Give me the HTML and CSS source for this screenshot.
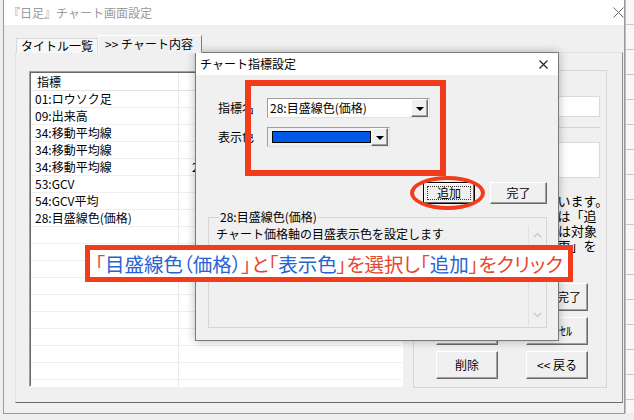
FILE: index.html
```html
<!DOCTYPE html>
<html lang="ja">
<head>
    <meta charset="UTF-8">
    <meta name="viewport" content="width=device-width, initial-scale=1.0">
    <title>チャート指標設定</title>
    <link rel="stylesheet" href="styles.css">
</head>
<body>
    <div class="desk">
        <div class="window">
            <div class="titlebar">
                <span class="title inactive">『日足』チャート画面設定</span>
                <svg class="close big" width="11" height="11" viewBox="0 0 11 11"><path d="M0.5 0.5 L10.5 10.5 M10.5 0.5 L0.5 10.5" stroke="#6a6a6a" stroke-width="1" fill="none"/></svg>
            </div>
            <div class="window-body">
                <div class="tabs">
                    <div class="tab">タイトル一覧</div>
                    <div class="tab active">&gt;&gt; チャート内容</div>
                </div>
                <div class="tab-panel">
                    <div class="list">
                        <div class="list-head">
                            <div class="cell first">指標</div>
                            <div class="cell"></div>
                        </div>
                        <div class="list-row"><div class="cell first">01:ロウソク足</div><div class="cell"></div></div>
                        <div class="list-row"><div class="cell first">09:出来高</div><div class="cell"></div></div>
                        <div class="list-row"><div class="cell first">34:移動平均線</div><div class="cell"></div></div>
                        <div class="list-row"><div class="cell first">34:移動平均線</div><div class="cell"></div></div>
                        <div class="list-row"><div class="cell first">34:移動平均線</div><div class="cell num">25</div></div>
                        <div class="list-row"><div class="cell first">53:GCV</div><div class="cell"></div></div>
                        <div class="list-row"><div class="cell first">54:GCV平均</div><div class="cell"></div></div>
                        <div class="list-row"><div class="cell first">28:目盛線色(価格)</div><div class="cell"></div></div>
                        <div class="list-row"><div class="cell first"></div><div class="cell"></div></div>
                        <div class="list-row"><div class="cell first"></div><div class="cell"></div></div>
                        <div class="list-row"><div class="cell first"></div><div class="cell"></div></div>
                        <div class="list-row"><div class="cell first"></div><div class="cell"></div></div>
                        <div class="list-row"><div class="cell first"></div><div class="cell"></div></div>
                        <div class="list-row"><div class="cell first"></div><div class="cell"></div></div>
                        <div class="list-row"><div class="cell first"></div><div class="cell"></div></div>
                        <div class="list-row"><div class="cell first"></div><div class="cell"></div></div>
                        <div class="list-row"><div class="cell first"></div><div class="cell"></div></div>
                        <div class="list-row"><div class="cell first"></div><div class="cell"></div></div>
                    </div>
                    <div class="side-group">
                        <div class="field"></div>
                        <div class="rule"></div>
                        <div class="field tall"></div>
                        <p class="hint">指標の一覧を表示しています。<br>指標を新しく加える時は「追<br>加」を、変更する場合は対象<br>の指標を選択して「変更」を</p>
                        <div class="btn-grid">
                            <div class="btn">変更</div>
                            <div class="btn">設定完了</div>
                            <div class="btn">新規</div>
                            <div class="btn">ｷｬﾝｾﾙ</div>
                            <div class="btn">削除</div>
                            <div class="btn">&lt;&lt; 戻る</div>
                        </div>
                    </div>
                </div>
            </div>
        </div>
        <div class="backdrop"></div>

        <div class="dialog">
            <div class="titlebar small">
                <span class="title">チャート指標設定</span>
                <svg class="close" width="9" height="9" viewBox="0 0 9 9"><path d="M0.5 0.5 L8.5 8.5 M8.5 0.5 L0.5 8.5" stroke="#222" stroke-width="1.1" fill="none"/></svg>
            </div>
            <div class="dialog-body">
                <div class="form-row">
                    <label>指標名</label>
                    <div class="combo wide">
                        <span class="combo-text">28:目盛線色(価格)</span>
                        <span class="drop"></span>
                    </div>
                </div>
                <div class="form-row">
                    <label>表示色</label>
                    <div class="combo color">
                        <span class="swatch"></span>
                        <span class="drop"></span>
                    </div>
                </div>
                <div class="actions">
                    <div class="btn focus add">追加</div>
                    <div class="btn done">完了</div>
                </div>
                <fieldset class="info">
                    <legend>28:目盛線色(価格)</legend>
                    <div class="desc">
                        <div class="desc-text">チャート価格軸の目盛表示色を設定します</div>
                        <div class="scroll">
                            <svg width="9" height="6" viewBox="0 0 9 6"><path d="M1 5 L4.5 1.5 L8 5" stroke="#c4c4c4" stroke-width="1.2" fill="none"/></svg>
                            <svg width="9" height="6" viewBox="0 0 9 6"><path d="M1 1 L4.5 4.5 L8 1" stroke="#c4c4c4" stroke-width="1.2" fill="none"/></svg>
                        </div>
                    </div>
                </fieldset>
            </div>
        </div>

        <div class="mark-rect"></div>
        <div class="mark-ring"></div>
        <div class="note">
            <span class="r">「</span><span class="b">目盛線色（価格）</span><span class="r">」と「</span><span class="b">表示色</span><span class="r">」を選択し「</span><span class="b">追加</span><span class="r">」をクリック</span>
        </div>
    </div>
</body>
</html>
```

FILE: styles.css
```css
* {
    box-sizing: border-box;
}

body {
    margin: 0;
    font-family: "Noto Sans CJK JP", "Noto Sans", sans-serif;
    font-size: 12px;
    line-height: 14px;
    color: #000;
    background: #eeeeee;
}

.desk {
    position: relative;
    width: 634px;
    height: 420px;
    overflow: hidden;
    display: flex;
    background: #eeeeee;
}

/* main window */
.window {
    flex: none;
    margin-left: 3px;
    width: 622px;
    height: 414px;
    border: 1px solid #9a9a9a;
    border-top: none;
    background: #f0f0f0;
    display: flex;
    flex-direction: column;
}

.titlebar {
    height: 25px;
    background: #fff;
    display: flex;
    align-items: center;
    justify-content: space-between;
    padding-left: 4px;
}

.title.inactive {
    color: #9a9a9a;
}

.close.big {
    margin-top: -1px;
}

.window-body {
    flex: 1;
    display: flex;
    flex-direction: column;
    padding: 10px 1px 10px 11px;
}

.tabs {
    display: flex;
    align-items: flex-end;
    height: 18px;
    margin-left: 1px;
    position: relative;
    z-index: 1;
}

.tab {
    height: 15px;
    line-height: 14px;
    padding: 0 4px;
    white-space: nowrap;
    background: #f7f7f7;
    border: 1px solid #d9d9d9;
    border-bottom: none;
}

.tab:first-child {
    width: 82px;
}

.tab.active {
    width: 104px;
    height: 18px;
    padding: 1px 6px 0;
    background: #f0f0f0;
    border-color: #ffffff #7d7d7d #f0f0f0 #ffffff;
    border-bottom: 1px solid #f0f0f0;
}

.tab-panel {
    flex: 1;
    display: flex;
    align-items: flex-start;
    gap: 10px;
    padding: 17px 14px 0 13px;
    border: 1px solid;
    border-color: #e3e3e3 #8f8f8f #6a6a6a #e3e3e3;
    margin-top: -1px;
}

/* indicator list */
.list {
    width: 374px;
    height: 316px;
    margin-top: 1px;
    overflow: hidden;
    background: #fff;
    border: 1px solid;
    border-color: #a0a0a0 #ffffff #ffffff #a0a0a0;
    box-shadow: inset 1px 1px #696969;
    padding: 1px 0 0 1px;
}

.list-head,
.list-row {
    display: grid;
    grid-template-columns: 148px 1fr;
}

.list-head {
    height: 18px;
    border-bottom: 1px solid #e3e3e3;
}

.list-head .cell {
    padding-left: 6px;
    line-height: 17px;
}

.list-row {
    height: 17px;
    border-bottom: 1px solid #efefef;
}

.cell {
    line-height: 16px;
    padding-left: 4px;
    white-space: nowrap;
}

.cell.first {
    border-right: 1px solid #e8e8e8;
}

.cell.num {
    padding-left: 13px;
}

/* right group */
.side-group {
    width: 194px;
    height: 318px;
    border: 1px solid #d6d6d6;
    padding: 25px 6px 0 0;
}

.field {
    height: 21px;
    margin-left: 56px;
    background: #fff;
    border: 1px solid #dadada;
}

.field.tall {
    height: 36px;
    margin-top: 14px;
}

.rule {
    height: 1px;
    margin: 10px 0 0 56px;
    background: #d2d2d2;
}

.hint {
    width: 180px;
    margin: 15px 0 0 14px;
    font-size: 13px;
    line-height: 15px;
    white-space: nowrap;
}

.btn-grid {
    display: grid;
    grid-template-columns: 62px 62px;
    gap: 6px 28px;
    margin: 30px 0 0 22px;
}

.btn {
    height: 28px;
    display: flex;
    align-items: center;
    justify-content: center;
    background: #f0f0f0;
    border: 1px solid;
    border-color: #ffffff #696969 #696969 #ffffff;
    box-shadow: inset -1px -1px #a0a0a0;
    white-space: nowrap;
}

.backdrop {
    flex: 1;
    height: 413px;
    background-color: #f8f8f8;
    background-image: repeating-linear-gradient(to bottom, transparent 0, transparent 24px, #c8c8c8 24px, #c8c8c8 25px);
    border-left: 1px solid #bdbdbd;
}

/* dialog */
.dialog {
    position: absolute;
    left: 195px;
    top: 52px;
    width: 364px;
    height: 289px;
    background: #f0f0f0;
    border: 1px solid #7a7a7a;
    box-shadow: 0 0 9px rgba(0, 0, 0, 0.28);
    display: flex;
    flex-direction: column;
}

.titlebar.small {
    height: 22px;
    padding-left: 4px;
    padding-right: 10px;
}

.dialog-body {
    flex: 1;
    padding: 23px 11px 0 12px;
}

.form-row {
    display: flex;
    align-items: center;
    margin-left: 10px;
    height: 20px;
}

.form-row + .form-row {
    margin-top: 9px;
}

.form-row label {
    width: 49px;
}

.combo {
    height: 20px;
    display: flex;
    align-items: center;
    justify-content: space-between;
    background: #fff;
    border: 1px solid;
    border-color: #a0a0a0 #e3e3e3 #e3e3e3 #a0a0a0;
    padding: 0 1px 0 2px;
}

.combo.wide {
    width: 163px;
}

.combo.color {
    width: 123px;
    background: #f0f0f0;
    padding-left: 4px;
}

.combo-text {
    white-space: nowrap;
}

.swatch {
    width: 101px;
    height: 12px;
    background: #0058e6;
    border: 1px solid #000;
}

.drop {
    width: 17px;
    height: 18px;
    display: flex;
    align-items: center;
    justify-content: center;
    background: #f0f0f0;
    border: 1px solid;
    border-color: #ffffff #696969 #696969 #ffffff;
    box-shadow: inset -1px -1px #a0a0a0;
}

.drop::after {
    content: "";
    border-left: 4px solid transparent;
    border-right: 4px solid transparent;
    border-top: 4px solid #000;
    margin-top: 1px;
}

.actions {
    display: flex;
    justify-content: flex-end;
    gap: 15px;
    margin-top: 35px;
}

.actions .btn {
    height: 22px;
}

.btn.add {
    width: 52px;
}

.btn.done {
    width: 57px;
}

.btn.focus {
    position: relative;
    border-color: #000;
    box-shadow: inset -1px -1px #696969, inset 1px 1px #ffffff;
}

.btn.focus::after {
    content: "";
    position: absolute;
    inset: 3px;
    border: 1px dotted #333;
}

.info {
    margin: 6px 0 0 0;
    padding: 0 1px 1px 3px;
    border: 1px solid #d6d6d6;
}

.info legend {
    margin-left: 7px;
    padding: 0 1px;
    line-height: 14px;
}

.desc {
    display: flex;
    height: 100px;
    margin-top: 2px;
}

.desc-text {
    flex: 1;
    padding: 1px 4px;
}

.scroll {
    width: 17px;
    display: flex;
    flex-direction: column;
    align-items: center;
    justify-content: space-between;
    padding: 6px 0 8px;
    border-left: 1px solid #e2e2e2;
}

/* annotations drawn over the screenshot */
.mark-rect {
    position: absolute;
    left: 245px;
    top: 80px;
    width: 201px;
    height: 96px;
    border: 6px solid #f23c1c;
}

.mark-ring {
    position: absolute;
    left: 410px;
    top: 176px;
    width: 75px;
    height: 34px;
    border: 4px solid #f23c1c;
    border-radius: 50%;
}

.note {
    position: absolute;
    left: 85px;
    top: 245px;
    width: 488px;
    height: 37px;
    background: #fff;
    border: 5px solid #f23c1c;
    display: flex;
    align-items: center;
    justify-content: center;
    font-size: 19.5px;
    line-height: 24px;
    font-feature-settings: "palt";
    white-space: nowrap;
}

.note .r {
    color: #e9452c;
}

.note .b {
    color: #2763d2;
}
```
